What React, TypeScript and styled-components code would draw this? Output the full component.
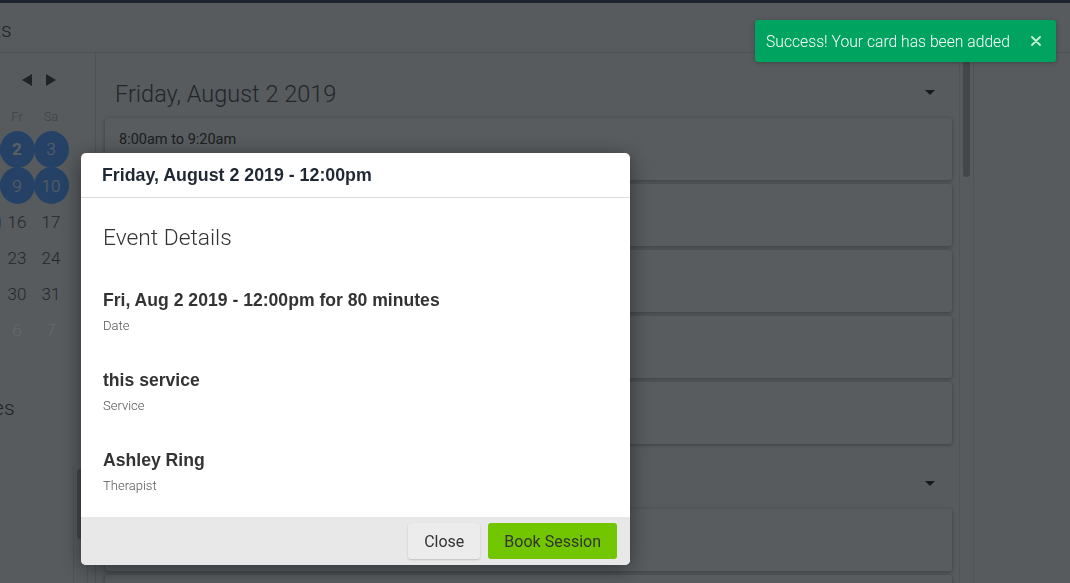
import React from "react";
import styled, { createGlobalStyle } from "styled-components";

const GlobalStyle = createGlobalStyle`
  html, body { margin: 0; padding: 0; }
  body {
    font-family: "Liberation Sans", Arial, sans-serif;
    overflow: hidden;
    -webkit-font-smoothing: antialiased;
  }
  * { box-sizing: border-box; }
`;

const LIGHT = `Roboto, "Liberation Sans", Arial, sans-serif`;

/* ---------- background page ---------- */
const Page = styled.div`
  position: relative;
  width: 1070px;
  height: 583px;
  overflow: hidden;
  background: #dae4eb;
  display: flex;
  flex-direction: column;
`;

const TopStrip = styled.div`
  flex: none;
  height: 3px;
  background: #4b5878;
`;

const Scrolled = styled.div`
  flex: 1;
  min-height: 0;
  margin-left: -200px;
  display: flex;
  flex-direction: column;
`;

const Header = styled.header`
  flex: none;
  height: 50px;
  border-bottom: 1px solid #c3cdd4;
  display: flex;
  align-items: center;
  padding-left: 82px;
  padding-top: 5px;
`;

const HeaderTitle = styled.h1`
  margin: 0;
  font-family: ${LIGHT};
  font-weight: 300;
  font-size: 21px;
  color: #4f5760;
`;

const Body = styled.div`
  flex: 1;
  min-height: 0;
  display: flex;
`;

const Sidebar = styled.aside`
  flex: none;
  width: 296px;
  border-right: 1px solid #c3cdd4;
  padding: 0 7px 0 30px;
  display: flex;
  flex-direction: column;
`;

const CalNav = styled.div`
  width: 238px;
  margin-top: 18px;
  height: 18px;
  display: flex;
  align-items: center;
  justify-content: flex-end;
  gap: 14px;
  padding-right: 12px;
`;

const NavArrow = styled.svg`
  width: 10px;
  height: 12px;
  display: block;
`;

const DayHeads = styled.div`
  width: 238px;
  margin-top: 17px;
  display: grid;
  grid-template-columns: repeat(7, 34px);
  height: 20px;
  align-items: center;
`;

const DayHead = styled.span`
  text-align: center;
  font-family: ${LIGHT};
  font-weight: 300;
  font-size: 13px;
  color: #9aa6b0;
`;

const DateGrid = styled.div`
  width: 238px;
  margin-top: 5px;
  display: grid;
  grid-template-columns: repeat(7, 34px);
  grid-template-rows: 36px 37px 36px 36px 36px 36px;
`;

const DateCell = styled.div<{ $avail?: boolean; $selected?: boolean; $muted?: boolean }>`
  display: flex;
  align-items: center;
  justify-content: center;
  align-self: center;
  justify-self: center;
  width: 35px;
  height: 37px;
  border-radius: 50%;
  font-family: ${LIGHT};
  font-size: 17px;
  font-weight: ${(p) => (p.$selected ? 700 : 300)};
  color: ${(p) => (p.$avail ? "#e6eef6" : p.$muted ? "#ffffff" : "#5a626b")};
  background: ${(p) => (p.$avail ? "#5ca6ff" : "transparent")};
`;

const SideTitle = styled.h2`
  margin: 48px 0 0 0;
  padding-left: 20px;
  font-family: ${LIGHT};
  font-weight: 300;
  font-size: 21px;
  color: #4f5760;
`;

const SideList = styled.div`
  flex: 1;
  margin-top: 46px;
  display: flex;
  justify-content: flex-end;
`;

const Track = styled.div`
  flex: none;
  width: 15px;
  border-left: 1px solid #c8d2d8;
  border-right: 1px solid #c8d2d8;
  padding: 3px 0 0 3px;
`;

const Thumb = styled.div<{ $h: number }>`
  width: 7px;
  height: ${(p) => p.$h}px;
  border-radius: 4px;
  background: #a8b2ba;
`;

const Main = styled.main`
  flex: none;
  width: 863px;
  padding: 0 7px 0 9px;
  overflow: hidden;
`;

const DayGroup = styled.section``;

const DayTitleRow = styled.div`
  height: 65px;
  display: flex;
  align-items: center;
  justify-content: space-between;
  padding: 16px 17px 0 10px;
`;

const DayTitle = styled.h3`
  margin: 0;
  font-family: ${LIGHT};
  font-weight: 300;
  font-size: 23.5px;
  color: #555d66;
`;

const Caret = styled.span`
  width: 0;
  height: 0;
  border-left: 5px solid transparent;
  border-right: 5px solid transparent;
  border-top: 5px solid #3a424a;
  margin-top: -2px;
`;

const Slots = styled.div`
  display: flex;
  flex-direction: column;
  gap: 4px;
`;

const Slot = styled.div`
  height: 62px;
  border-radius: 3px;
  background: #dde6ed;
  box-shadow: 0 1px 4px rgba(0, 0, 0, 0.32);
  padding: 13px 14px;
  font-family: ${LIGHT};
  font-weight: 400;
  font-size: 14.5px;
  color: #454c53;
`;

const MainTrack = styled(Track)`
  height: 100%;
  padding-top: 7px;
`;

/* ---------- overlay / modal ---------- */
const Backdrop = styled.div`
  position: fixed;
  inset: 0;
  background: rgba(0, 0, 0, 0.6);
  z-index: 10;
`;

const Modal = styled.div`
  width: 549px;
  margin: 153px 0 0 81px;
  background: #fff;
  border-radius: 5px;
  overflow: hidden;
  box-shadow: 0 4px 22px rgba(0, 0, 0, 0.45);
  display: flex;
  flex-direction: column;
`;

const ModalHeader = styled.div`
  height: 45px;
  border-bottom: 1px solid #dcdcdc;
  padding: 1px 21px 0;
  display: flex;
  align-items: center;
  font-weight: 700;
  font-size: 17.8px;
  color: #1f2833;
`;

const ModalBody = styled.div`
  padding: 25px 22px 24px;
`;

const SectionTitle = styled.h4`
  margin: 0;
  height: 30px;
  line-height: 30px;
  font-family: ${LIGHT};
  font-weight: 300;
  font-size: 22.8px;
  color: #333;
`;

const Field = styled.div`
  margin-top: 36px;
  display: flex;
  flex-direction: column;
  gap: 7px;
`;

const FieldValue = styled.div`
  height: 22px;
  line-height: 22px;
  font-weight: 700;
  font-size: 17.6px;
  color: #333;
`;

const FieldLabel = styled.div`
  height: 15px;
  line-height: 15px;
  font-family: ${LIGHT};
  font-weight: 300;
  font-size: 13px;
  color: #555;
`;

const ModalFooter = styled.div`
  height: 48px;
  background: #e8e8e8;
  padding: 6px 13px;
  display: flex;
  justify-content: flex-end;
  gap: 8px;
`;

const Button = styled.button<{ $primary?: boolean }>`
  height: 36px;
  padding: 0 16px;
  border: none;
  border-radius: 3px;
  font-family: ${LIGHT};
  font-weight: 400;
  font-size: 16px;
  color: #333;
  background: ${(p) => (p.$primary ? "#72c600" : "#ececec")};
  box-shadow: ${(p) => (p.$primary ? "none" : "0 1px 2px rgba(0,0,0,0.18)")};
  cursor: pointer;
`;

/* ---------- toast ---------- */
const Toast = styled.div`
  position: absolute;
  top: 20px;
  right: 14px;
  z-index: 20;
  width: 301px;
  height: 42px;
  border-radius: 3px;
  background: #00a35f;
  box-shadow: 0 1px 4px rgba(0, 0, 0, 0.25);
  display: flex;
  align-items: center;
  justify-content: space-between;
  padding: 0 15px 0 11px;
  font-family: ${LIGHT};
  font-weight: 300;
  font-size: 15.7px;
  color: #fff;
`;

const ToastClose = styled.svg`
  width: 10px;
  height: 10px;
  display: block;
`;

const dayHeads = ["Su", "Mo", "Tu", "We", "Th", "Fr", "Sa"];

type Day = { n: number; avail?: boolean; selected?: boolean; muted?: boolean };
const days: Day[] = [
  { n: 28, muted: true }, { n: 29, muted: true }, { n: 30, muted: true }, { n: 31, muted: true },
  { n: 1, avail: true }, { n: 2, avail: true, selected: true }, { n: 3, avail: true },
  { n: 4 }, { n: 5 }, { n: 6 }, { n: 7 }, { n: 8, avail: true }, { n: 9, avail: true }, { n: 10, avail: true },
  { n: 11 }, { n: 12 }, { n: 13 }, { n: 14 }, { n: 15, avail: true }, { n: 16 }, { n: 17 },
  { n: 18 }, { n: 19 }, { n: 20 }, { n: 21 }, { n: 22 }, { n: 23 }, { n: 24 },
  { n: 25 }, { n: 26 }, { n: 27 }, { n: 28 }, { n: 29 }, { n: 30 }, { n: 31 },
  { n: 1, muted: true }, { n: 2, muted: true }, { n: 3, muted: true }, { n: 4, muted: true },
  { n: 5, muted: true }, { n: 6, muted: true }, { n: 7, muted: true },
];

/* only the first slot's label is visible; the rest sit under the dialog */
const friSlots = ["8:00am to 9:20am", "", "", "", ""];
const satSlots = ["", ""];

export default function App() {
  return (
    <>
      <GlobalStyle />
      <Page>
        <TopStrip />
        <Scrolled>
          <Header>
            <HeaderTitle>Appointments</HeaderTitle>
          </Header>
          <Body>
            <Sidebar>
              <CalNav>
                <NavArrow viewBox="0 0 10 12">
                  <path d="M10 0 L10 12 L0 6 Z" fill="#4f5860" />
                </NavArrow>
                <NavArrow viewBox="0 0 10 12">
                  <path d="M0 0 L0 12 L10 6 Z" fill="#4f5860" />
                </NavArrow>
              </CalNav>
              <DayHeads>
                {dayHeads.map((d) => (
                  <DayHead key={d}>{d}</DayHead>
                ))}
              </DayHeads>
              <DateGrid>
                {days.map((d, i) => (
                  <DateCell key={i} $avail={d.avail} $selected={d.selected} $muted={d.muted}>
                    {d.n}
                  </DateCell>
                ))}
              </DateGrid>
              <SideTitle>Available Services</SideTitle>
              <SideList>
                <Track>
                  <Thumb $h={70} />
                </Track>
              </SideList>
            </Sidebar>
            <Main>
              <DayGroup>
                <DayTitleRow>
                  <DayTitle>Friday, August 2 2019</DayTitle>
                  <Caret />
                </DayTitleRow>
                <Slots>
                  {friSlots.map((s, i) => (
                    <Slot key={i}>{s}</Slot>
                  ))}
                </Slots>
              </DayGroup>
              <DayGroup>
                <DayTitleRow>
                  <DayTitle />
                  <Caret />
                </DayTitleRow>
                <Slots>
                  {satSlots.map((s, i) => (
                    <Slot key={i}>{s}</Slot>
                  ))}
                </Slots>
              </DayGroup>
            </Main>
            <MainTrack>
              <Thumb $h={117} />
            </MainTrack>
          </Body>
        </Scrolled>

        <Backdrop>
          <Modal>
            <ModalHeader>Friday, August 2 2019 - 12:00pm</ModalHeader>
            <ModalBody>
              <SectionTitle>Event Details</SectionTitle>
              <Field>
                <FieldValue>Fri, Aug 2 2019 - 12:00pm for 80 minutes</FieldValue>
                <FieldLabel>Date</FieldLabel>
              </Field>
              <Field>
                <FieldValue>this service</FieldValue>
                <FieldLabel>Service</FieldLabel>
              </Field>
              <Field>
                <FieldValue>Ashley Ring</FieldValue>
                <FieldLabel>Therapist</FieldLabel>
              </Field>
            </ModalBody>
            <ModalFooter>
              <Button>Close</Button>
              <Button $primary>Book Session</Button>
            </ModalFooter>
          </Modal>
        </Backdrop>

        <Toast>
          <span>Success! Your card has been added</span>
          <ToastClose viewBox="0 0 10 10">
            <path d="M1 1 L9 9 M9 1 L1 9" stroke="#c6eed9" strokeWidth="1.8" strokeLinecap="round" />
          </ToastClose>
        </Toast>
      </Page>
    </>
  );
}
